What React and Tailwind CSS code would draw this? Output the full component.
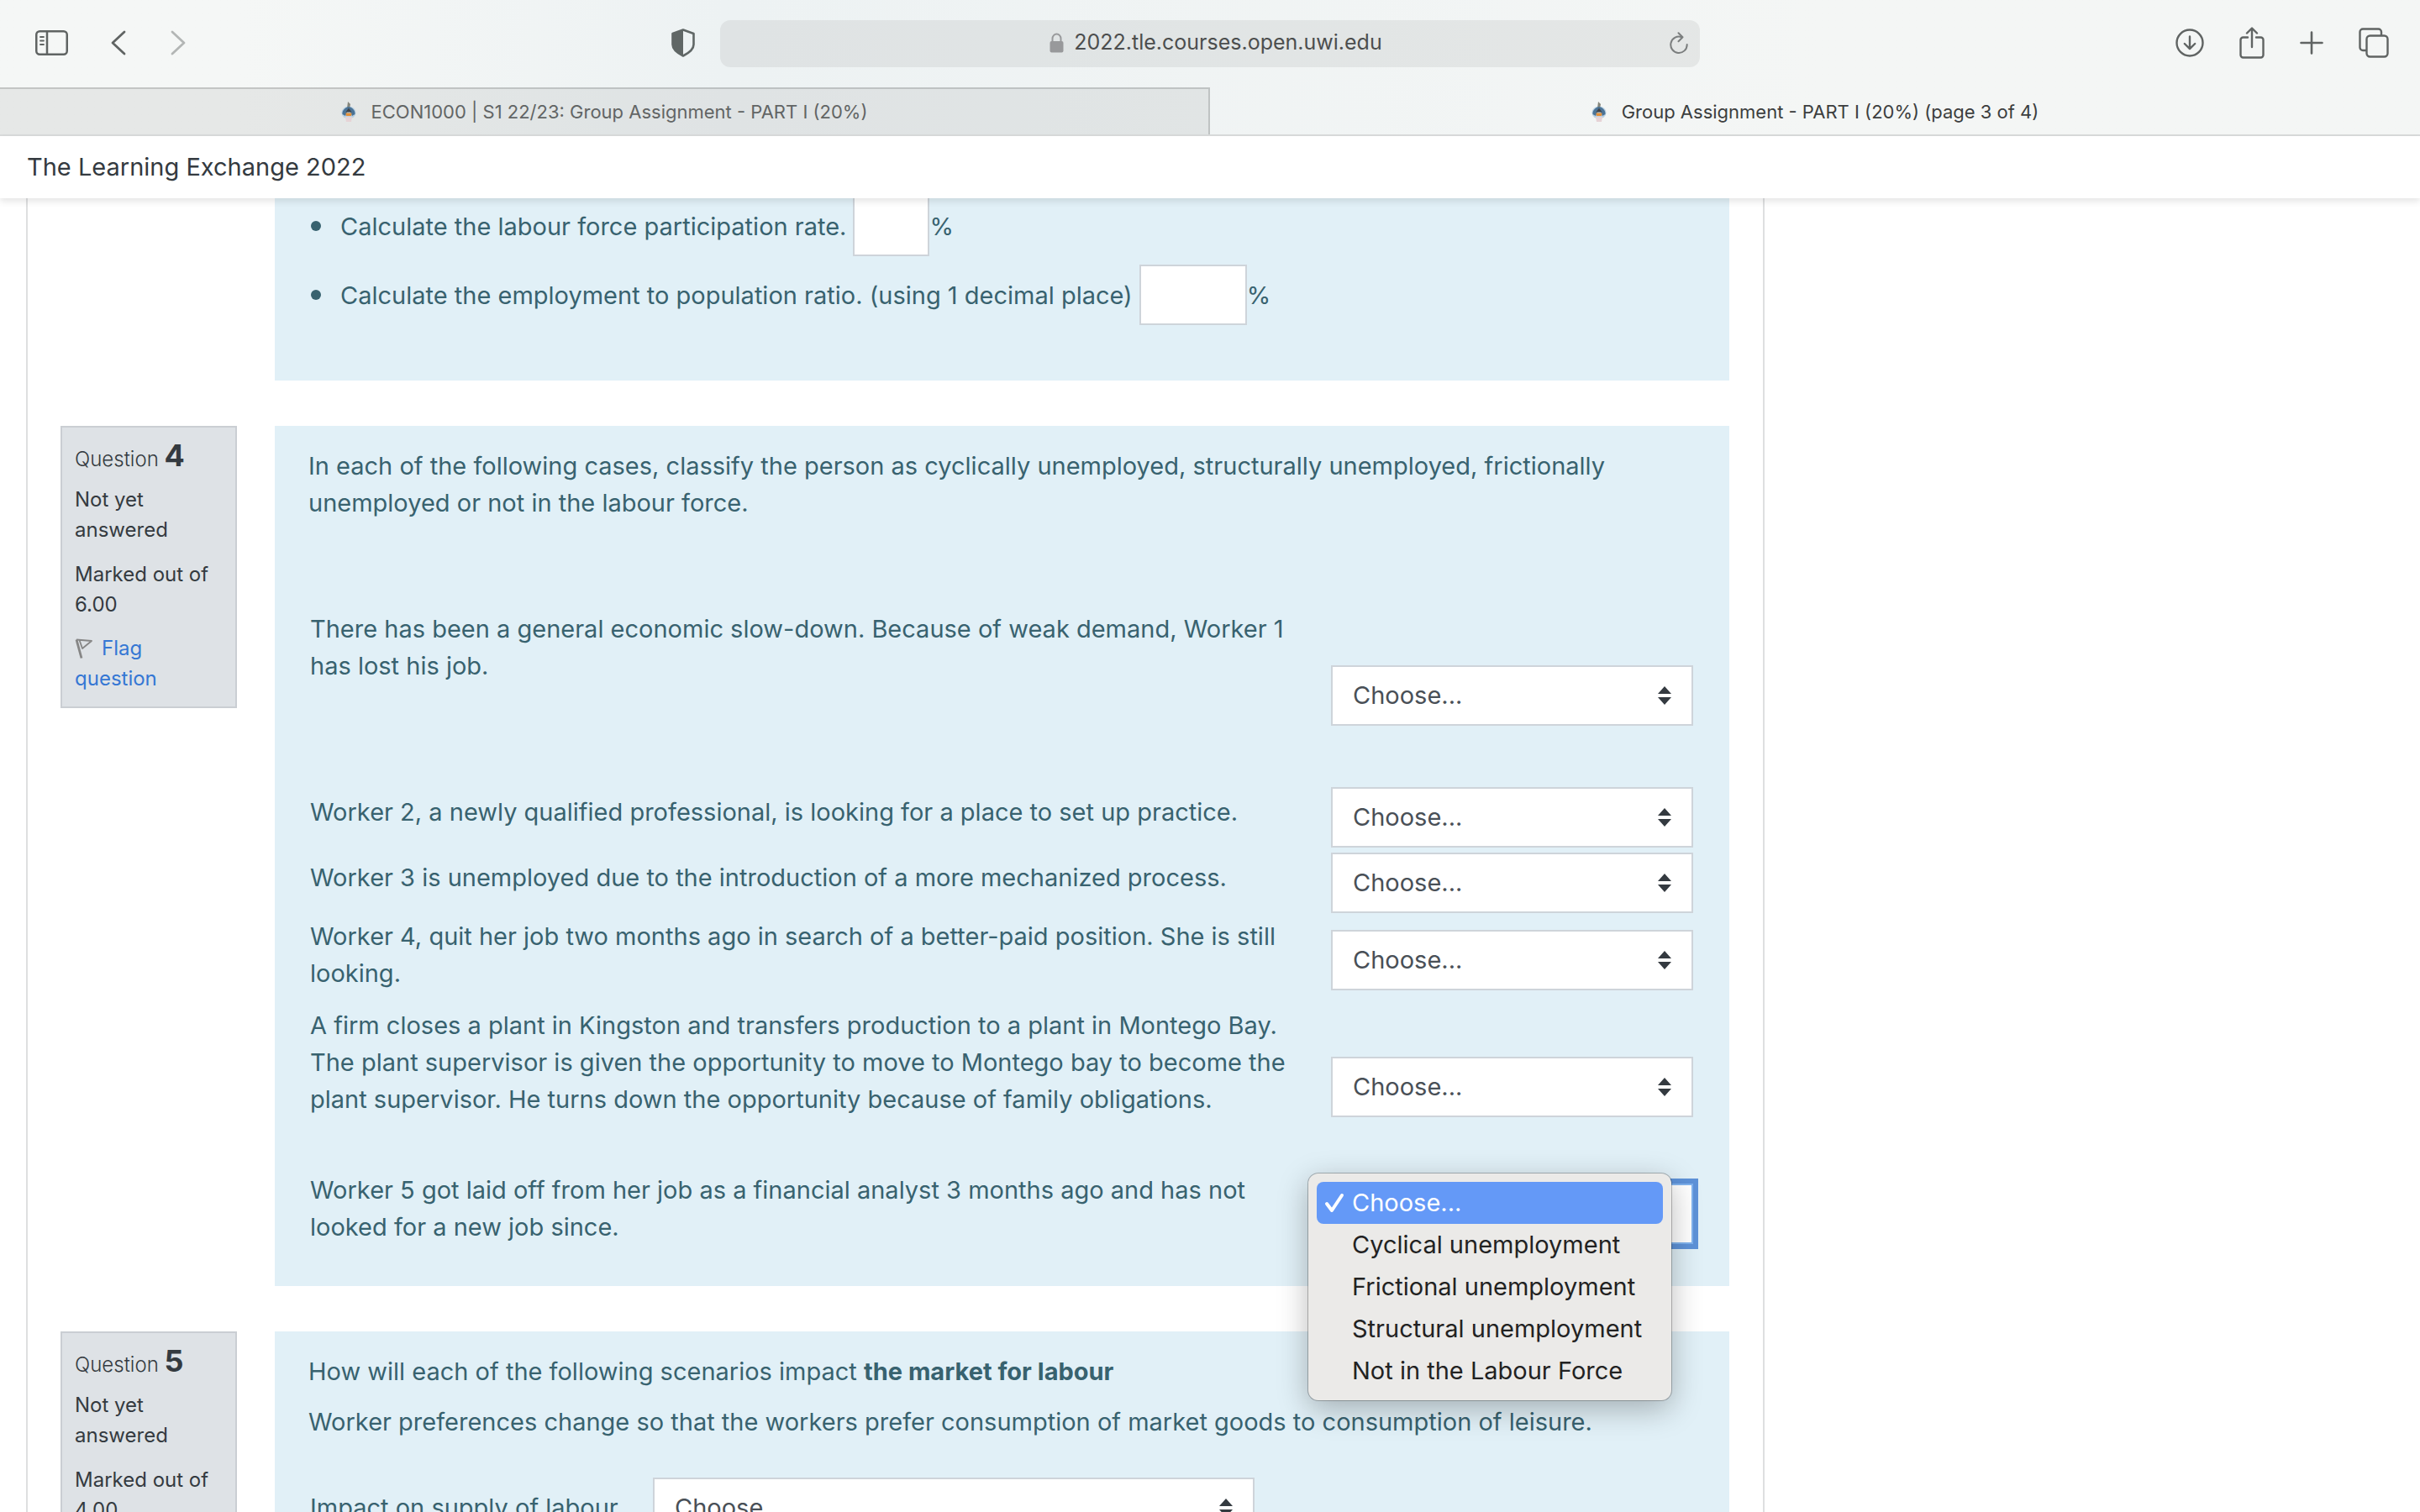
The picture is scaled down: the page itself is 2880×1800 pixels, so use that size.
import React, { useState } from 'react';

const CHOICES = ['Choose...', 'Cyclical unemployment', 'Frictional unemployment', 'Structural unemployment', 'Not in the Labour Force'];

const WORKERS = [
    { id: 'w1', text: 'There has been a general economic slow-down. Because of weak demand, Worker 1 has lost his job.', pad: 'pt-2 pb-[116px]' },
    { id: 'w2', text: 'Worker 2, a newly qualified professional, is looking for a place to set up practice.', pad: 'pt-[6px] pb-3' },
    { id: 'w3', text: 'Worker 3 is unemployed due to the introduction of a more mechanized process.', pad: 'pt-[6px] pb-3' },
    { id: 'w4', text: 'Worker 4, quit her job two months ago in search of a better-paid position. She is still looking.', pad: 'pt-[6px] pb-3' },
    { id: 'w5', text: 'A firm closes a plant in Kingston and transfers production to a plant in Montego Bay. The plant supervisor is given the opportunity to move to Montego bay to become the plant supervisor. He turns down the opportunity because of family obligations.', pad: 'pt-[6px] pb-[58px]' },
    { id: 'w6', text: 'Worker 5 got laid off from her job as a financial analyst 3 months ago and has not looked for a new job since.', pad: 'pt-[6px] pb-3', open: true },
];

function SidebarIcon() {
    return (
        <svg width="39" height="30" viewBox="0 0 39 30" fill="none" stroke="#606463" strokeWidth="2.5" strokeLinecap="round">
            <rect x="1.25" y="1.25" width="36.5" height="27.5" rx="4" />
            <path d="M14 2v26" />
            <path d="M6 8h4M6 12.5h4M6 17h4" strokeWidth="1.8" />
        </svg>
    );
}

function Chevron({ flip = false }) {
    return (
        <svg width="18" height="30" viewBox="0 0 18 30" fill="none" stroke={flip ? '#b3b6b5' : '#606463'} strokeWidth="2.8" strokeLinecap="round" strokeLinejoin="round">
            <path d={flip ? 'M2 2l14 13L2 28' : 'M16 2L2 15l14 13'} />
        </svg>
    );
}

function ShieldIcon() {
    return (
        <svg width="28" height="34" viewBox="0 0 28 34" fill="none">
            <path d="M14 1.5L26.5 6v13c0 6-5.5 10-12.5 13.500C7 29 1.5 25 1.5 19V6z" stroke="#606766" strokeWidth="2.6" strokeLinejoin="round" />
            <path d="M14 1.5L1.5 6v13c0 6 5.500 10 12.500 13.500z" fill="#606766" />
        </svg>
    );
}

function LockIcon() {
    return (
        <svg width="17" height="24" viewBox="0 0 17 24" fill="none">
            <rect x="0.5" y="10" width="16" height="13.5" rx="2" fill="#98999b" />
            <path d="M3.500 11V7a5 5.500 0 0 1 10 0v4" stroke="#98999b" strokeWidth="2" />
        </svg>
    );
}

function ReloadIcon() {
    return (
        <svg width="22" height="26" viewBox="0 0 22 26" fill="none" stroke="#7b7e7e" strokeWidth="2" strokeLinecap="round" strokeLinejoin="round">
            <path d="M14.500 6.200A9.700 9.700 0 1 0 20.700 15" />
            <path d="M10.500 1.200l5 5-5 5" />
        </svg>
    );
}

function DownloadIcon() {
    return (
        <svg width="34" height="34" viewBox="0 0 34 34" fill="none" stroke="#606463" strokeWidth="2.4" strokeLinecap="round" strokeLinejoin="round">
            <circle cx="17" cy="17" r="15.5" />
            <path d="M17 9.500v14.500M10.800 18l6.200 6.200 6.200-6.200" />
        </svg>
    );
}

function ShareIcon() {
    return (
        <svg width="30" height="38" viewBox="0 0 30 38" fill="none" stroke="#606463" strokeWidth="2.4" strokeLinecap="round" strokeLinejoin="round">
            <path d="M10 12.500H4.500a3 3 0 0 0-3 3v18a3 3 0 0 0 3 3h21a3 3 0 0 0 3-3v-18a3 3 0 0 0-3-3H20" />
            <path d="M15 24V2M9 7.500L15 1.500l6 6" />
        </svg>
    );
}

function PlusIcon() {
    return (
        <svg width="28" height="28" viewBox="0 0 28 28" fill="none" stroke="#606463" strokeWidth="2.6" strokeLinecap="round">
            <path d="M14 1.500v25M1.500 14h25" />
        </svg>
    );
}

function TabsIcon() {
    return (
        <svg width="36" height="36" viewBox="0 0 36 36" fill="none" stroke="#606463" strokeWidth="2.4" strokeLinejoin="round">
            <rect x="9.500" y="9.500" width="25" height="25" rx="4" />
            <path d="M9 27H5a3.500 3.500 0 0 1-3.500-3.500V5A3.500 3.500 0 0 1 5 1.500h18.500A3.500 3.500 0 0 1 27 5v4" />
        </svg>
    );
}

function Favicon() {
    return (
        <svg width="18" height="26" viewBox="0 0 18 26">
            <ellipse cx="9" cy="14" rx="8.500" ry="7.500" fill="#b9d0e2" />
            <path d="M8 1l3 3-1 5H7z" fill="#85867c" />
            <path d="M9 7c5 1 8 5 7.500 9L13 18 9 9 5 18l-3.500-2C1 12 4 8 9 7z" fill="#4b7396" />
            <path d="M9 8.500l3.500 5h-7z" fill="#3d434a" />
            <path d="M5.500 14.500h7L12 18H6z" fill="#e3903a" />
            <path d="M5 19h8l-1 6H6z" fill="#e6d3d6" />
        </svg>
    );
}

function FlagIcon() {
    return (
        <svg className="inline-block mr-[11px] align-[-4px]" width="21" height="24" viewBox="0 0 21 24" fill="none" stroke="#868686" strokeWidth="1.8" strokeLinejoin="round">
            <path d="M2 1.500l6 22" strokeWidth="2.8" />
            <path d="M2 1.500l18 1.500-11 9L5.500 2" />
        </svg>
    );
}

function ChooseSelect({ id, focused = false }) {
    return (
        <div className="relative">
            <select
                id={id}
                defaultValue="Choose..."
                className={`block w-full h-[72px] appearance-none border-2 bg-white pl-6 pr-14 text-[29px] text-[#495057] outline-none ${focused ? 'border-[#7fb2ee] ring-6 ring-[#5e92d8]' : 'border-[#ced4da]'}`}
            >
                {CHOICES.map((choice) => (
                    <option key={choice}>{choice}</option>
                ))}
            </select>
            <svg className="pointer-events-none absolute right-[26px] top-[25px]" width="16" height="22" viewBox="0 0 16 22" fill="#343a40">
                <path d="M8 0l8 9H0zM8 22l8-9H0z" />
            </svg>
        </div>
    );
}

function ChoiceMenu({ selected, onSelect }) {
    return (
        <div
            role="listbox"
            className="absolute -left-[27px] -top-3 z-20 w-[432px] rounded-xl bg-[#ebeae8] p-[10px] shadow-[0_0_0_1px_rgba(0,0,0,0.25),0_10px_36px_rgba(0,0,0,0.28)]"
        >
            {CHOICES.map((choice) => (
                <button
                    key={choice}
                    type="button"
                    role="option"
                    aria-selected={choice === selected}
                    onClick={() => onSelect(choice)}
                    className={`flex h-[50px] w-full items-center rounded-lg text-left text-[29px] whitespace-nowrap ${choice === selected ? 'bg-[#6499f7] text-white' : 'text-[#222222]'}`}
                >
                    <span className="flex w-[42px] shrink-0 pl-[9px]">
                        {choice === selected && (
                            <svg width="24" height="24" viewBox="0 0 24 24" fill="none" stroke="white" strokeWidth="4" strokeLinecap="round" strokeLinejoin="round">
                                <path d="M3 13l6 8L21 3" />
                            </svg>
                        )}
                    </span>
                    {choice}
                </button>
            ))}
        </div>
    );
}

function QuestionInfo({ number, marks }) {
    return (
        <aside className="w-[210px] shrink-0 border-2 border-[#caced3] bg-[#dee2e6] px-[15px] pt-[11px] pb-[15px] text-[24px] leading-9 text-[#343a40]">
            <h3 className="mb-[13px] h-11 leading-[44px]">
                <span className="font-light">Question </span>
                <span className="text-[36px] font-bold">{number}</span>
            </h3>
            <p className="mb-[17px]">Not yet answered</p>
            <p className="mb-4">Marked out of {marks}</p>
            <a href="#flag" className="block text-[#3577d4]">
                <FlagIcon />
                Flag question
            </a>
        </aside>
    );
}

function BlankItem({ id, label, width }) {
    return (
        <li className="flex items-center">
            <span className="mr-[23px] size-3 shrink-0 rounded-full bg-[#38626f]" />
            <label htmlFor={id} className="mr-2 pt-[2px]">{label}</label>
            <input id={id} type="text" className={`h-[72px] border-2 border-[#ced4da] bg-white px-4 outline-none ${width}`} />
            <span className="pt-[2px]">%</span>
        </li>
    );
}

export default function App() {
    const [choice, setChoice] = useState('Choose...');

    return (
        <div className="flex h-screen flex-col overflow-hidden bg-white font-['Inter',sans-serif] text-[29px]">
            {/* Browser chrome */}
            <header className="shrink-0 border-b-2 border-[#d9dbdb] bg-linear-to-r from-[#f5f7f6] from-10% via-[#edf2f3] via-30% to-[#f4f6f5] to-75%">
                <div className="grid h-[104px] grid-cols-[1fr_minmax(0,1166px)_1fr] items-center">
                    <div className="flex items-center pr-[30px] pb-[2px] pl-[42px]">
                        <button type="button" aria-label="Sidebar"><SidebarIcon /></button>
                        <button type="button" aria-label="Back" className="ml-[51px]"><Chevron /></button>
                        <button type="button" aria-label="Forward" className="ml-[53px]"><Chevron flip /></button>
                        <button type="button" aria-label="Privacy report" className="ml-auto"><ShieldIcon /></button>
                    </div>
                    <div className="flex h-14 items-center rounded-xl bg-black/6 px-[14px] pb-[2px]">
                        <div className="flex flex-1 items-center justify-center gap-3 pl-9 text-[25px] text-[#4c4e4e]">
                            <LockIcon />
                            <span>2022.tle.courses.open.uwi.edu</span>
                        </div>
                        <button type="button" aria-label="Reload"><ReloadIcon /></button>
                    </div>
                    <div className="flex items-center justify-end gap-[42px] pr-[37px] pb-[2px]">
                        <button type="button" aria-label="Downloads"><DownloadIcon /></button>
                        <button type="button" aria-label="Share"><ShareIcon /></button>
                        <button type="button" aria-label="New tab"><PlusIcon /></button>
                        <button type="button" aria-label="Tab overview"><TabsIcon /></button>
                    </div>
                </div>
                <nav className="grid h-14 grid-cols-2 text-[22px]">
                    <a href="#econ" className="flex items-center justify-center gap-[18px] border-t-2 border-r-2 border-black/15 bg-black/6 text-[#626565]">
                        <Favicon />
                        ECON1000 | S1 22/23: Group Assignment - PART I (20%)
                    </a>
                    <a href="#page3" className="flex items-center justify-center gap-[18px] border-t-2 border-transparent text-[#3c3e3e]">
                        <Favicon />
                        Group Assignment - PART I (20%) (page 3 of 4)
                    </a>
                </nav>
            </header>

            <div className="z-10 flex h-[74px] shrink-0 items-center bg-white px-8 text-[#343a40] shadow-[0_4px_8px_rgba(0,0,0,0.1)]">
                The Learning Exchange 2022
            </div>

            <main className="mr-[780px] ml-[31px] min-h-0 flex-1 overflow-hidden border-x-2 border-[#dedfe0] pr-10 pl-[39px] leading-[44px] text-[#38626f]">
                {/* Question 3 */}
                <section className="ml-[255px] bg-[#e1f0f7] pb-[66px] pl-[43px]">
                    <ul className="-mt-[3px] flex flex-col gap-[10px] overflow-hidden">
                        <BlankItem id="lfpr" label="Calculate the labour force participation rate." width="w-[91px]" />
                        <BlankItem id="epr" label="Calculate the employment to population ratio. (using 1 decimal place)" width="w-32" />
                    </ul>
                </section>

                {/* Question 4 */}
                <section className="mt-[54px] flex items-start gap-[45px]">
                    <QuestionInfo number="4" marks="6.00" />
                    <div className="flex-1 bg-[#e1f0f7] px-10 pt-[26px] pb-9">
                        <p>In each of the following cases, classify the person as cyclically unemployed, structurally unemployed, frictionally unemployed or not in the labour force.</p>
                        <table className="mt-[98px] w-full border-collapse">
                            <tbody>
                                {WORKERS.map((worker) => (
                                    <tr key={worker.id}>
                                        <td className={`pr-8 pl-[2px] align-middle ${worker.pad}`}>
                                            <label htmlFor={worker.id}>{worker.text}</label>
                                        </td>
                                        <td className="w-[434px] pt-[6px] pr-[3px] align-middle">
                                            <div className="relative">
                                                <ChooseSelect id={worker.id} focused={worker.open} />
                                                {worker.open && <ChoiceMenu selected={choice} onSelect={setChoice} />}
                                            </div>
                                        </td>
                                    </tr>
                                ))}
                            </tbody>
                        </table>
                    </div>
                </section>

                {/* Question 5 */}
                <section className="mt-[54px] flex items-start gap-[45px]">
                    <QuestionInfo number="5" marks="4.00" />
                    <div className="flex-1 bg-[#e1f0f7] px-10 pt-[26px] pb-9">
                        <p className="mb-4">How will each of the following scenarios impact <b className="font-bold">the market for labour</b></p>
                        <p>Worker preferences change so that the workers prefer consumption of market goods to consumption of leisure.</p>
                        <div className="mt-11 flex items-center pl-[2px]">
                            <label htmlFor="supply" className="w-[408px] shrink-0">Impact on supply of labour</label>
                            <div className="w-[716px]"><ChooseSelect id="supply" /></div>
                        </div>
                    </div>
                </section>
            </main>
        </div>
    );
}
